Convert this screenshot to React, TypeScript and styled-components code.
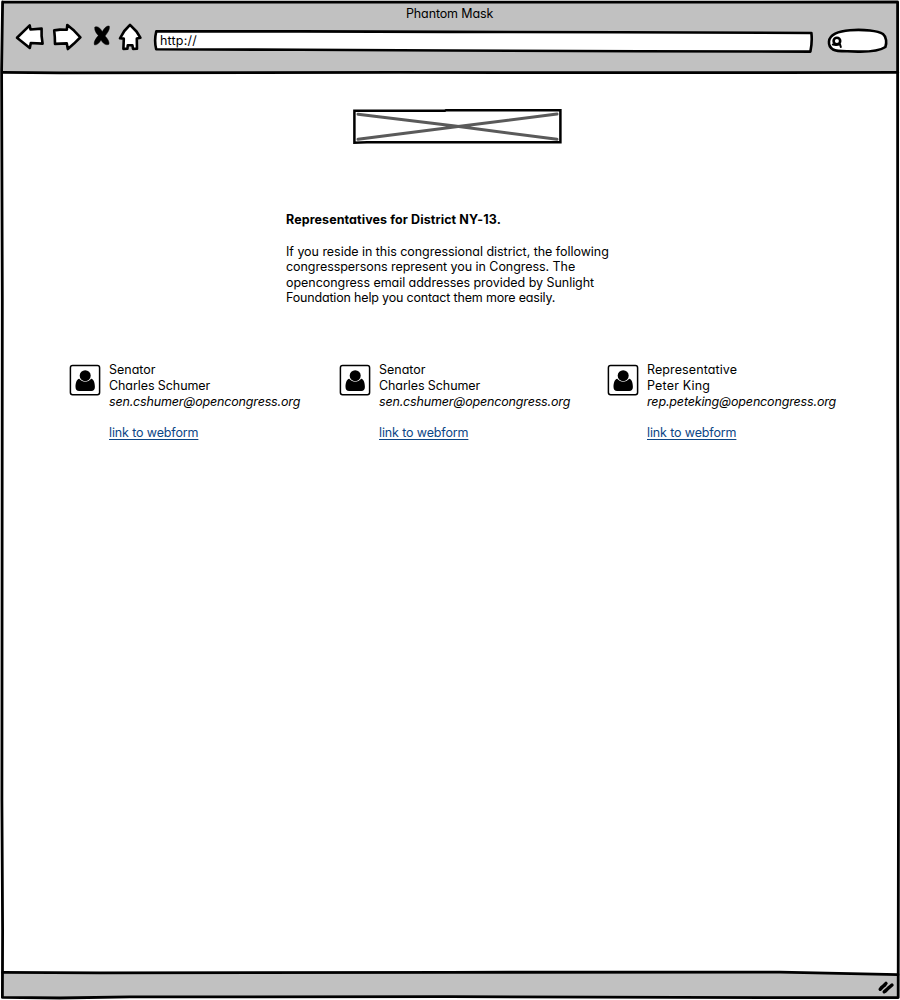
import React from "react";
import styled, { createGlobalStyle } from "styled-components";

const GlobalStyle = createGlobalStyle`
  *, *::before, *::after { box-sizing: border-box; }
  body { margin: 0; background: #fff; }
`;

const Window = styled.div`
  position: relative;
  display: flex;
  flex-direction: column;
  width: 900px;
  height: 1000px;
  overflow: hidden;
  background: #fff;
  color: #000;
  font-family: Inter, "Liberation Sans", sans-serif;
  font-feature-settings: "cv11" 1;
  font-size: 12.5px;
  line-height: 15.6px;
`;

const Sketch = styled.svg`
  display: block;
  flex: none;
  overflow: visible;
  fill: #fff;
  stroke: #000;
  stroke-width: 2.6;
  stroke-linejoin: round;
  stroke-linecap: round;
`;

const Backdrop = styled(Sketch)`
  position: absolute;
  inset: 0;
`;

const Header = styled.header`
  position: relative;
  display: flex;
  flex-direction: column;
  height: 73px;
  padding-top: 5.6px;
`;

const Title = styled.div`
  padding-left: 406px;
`;

const Toolbar = styled.div`
  display: flex;
  align-items: flex-start;
  padding: 1.8px 0 0 15px;
`;

const NavIcon = styled(Sketch)<{ $gap: number }>`
  margin-right: ${(p) => p.$gap}px;
`;

const AddressBar = styled.div`
  position: relative;
  width: 660px;
  height: 30px;
  margin-right: 13px;
  padding: 9.6px 0 0 7px;
`;

const Line = styled.span<{ $track?: number }>`
  position: relative;
  display: block;
  white-space: nowrap;
  letter-spacing: ${(p) => p.$track ?? 0}px;
`;

const Main = styled.main`
  position: relative;
  flex: 1;
  display: flex;
  flex-direction: column;
  padding-top: 36px;
`;

const LogoPlaceholder = styled(Sketch)`
  margin-left: 353px;
`;

const Intro = styled.section`
  margin: 67.6px 0 0 286px;
`;

const Heading = styled.h1`
  margin: 0 0 16.4px;
  font-size: inherit;
  font-weight: 650;
`;

const Copy = styled.p`
  margin: 0;
`;

const People = styled.section`
  display: grid;
  grid-template-columns: 270px 268px 250px;
  margin: 56.4px 0 0 69px;
`;

const Card = styled.article`
  display: flex;
  align-items: flex-start;
  gap: 8px;
`;

const Avatar = styled(Sketch)`
  margin-top: 2.5px;
`;

const Email = styled(Line)`
  font-style: italic;
`;

const WebformLink = styled.a`
  display: inline-block;
  margin-top: 15.6px;
  color: #0d4686;
  letter-spacing: -0.13px;
  text-decoration: underline;
  text-decoration-thickness: 1px;
  text-underline-offset: 2px;
  text-decoration-skip-ink: none;
`;

const Footer = styled.footer`
  position: relative;
  display: flex;
  justify-content: flex-end;
  height: 28px;
  padding: 8px 6px 0 0;
`;

const people = [
  { role: "Senator", roleTrack: 0, name: "Charles Schumer", nameTrack: -0.08, email: "sen.cshumer@opencongress.org", emailTrack: -0.167 },
  { role: "Senator", roleTrack: 0, name: "Charles Schumer", nameTrack: -0.08, email: "sen.cshumer@opencongress.org", emailTrack: -0.167 },
  { role: "Representative", roleTrack: 0.1, name: "Peter King", nameTrack: 0.18, email: "rep.peteking@opencongress.org", emailTrack: -0.155 },
];

function WindowFrame() {
  return (
    <Backdrop width="900" height="1000" viewBox="0 0 900 1000">
      <path d="M2.5 2 H897.8 V72.3 L600 72.4 L200 72.2 L2.5 72.5Z" fill="#c1c1c1" stroke="none" />
      <path d="M2.5 972.4 L780 972 L898 974.7 V997.6 L130 996.9 L2.5 997.6Z" fill="#c1c1c1" stroke="none" />
      <g fill="none" strokeWidth="2.8">
        <path d="M2.6 2 L450 2.1 L897.6 2 L897.7 400 L898.5 760 L898.2 997.6 L780 997.7 L450 996.6 L130 996.9 L60 998 L2.4 997.4 L2.6 930 L1.9 800 L2.3 300 L1.6 70 L2.6 2" />
        <path d="M2.5 72.4 L60 72.9 L400 72.4 L500 72.7 L780 72.7 L897.8 72.3" />
        <path d="M2.5 972.4 L100 972.8 L450 972.3 L780 972.1 L898 974.7" />
      </g>
    </Backdrop>
  );
}

function PersonIcon() {
  return (
    <Avatar width="32" height="31" viewBox="0 0 32 31">
      <rect x="1.4" y="0.6" width="29.2" height="29.2" rx="2.2" strokeWidth="1.5" />
      <path
        d="M10.2 13.8 C7.6 14.4 6.6 17.8 6.5 21.9 C6.5 24.4 7.9 26 10.1 26 H22.3 C24.5 26 25.9 24.4 25.9 21.9 C25.8 17.8 24.9 14.4 22.2 13.8 C20.4 15.6 18.4 16.7 16.2 16.7 C14 16.7 12 15.6 10.2 13.8Z"
        fill="#000"
        stroke="none"
      />
      <circle cx="16.2" cy="10.7" r="5.5" fill="#000" stroke="none" />
    </Avatar>
  );
}

export default function App() {
  return (
    <>
      <GlobalStyle />
      <Window>
        <WindowFrame />
        <Header>
          <Title>
            <Line $track={-0.13}>Phantom Mask</Line>
          </Title>
          <Toolbar>
            <NavIcon $gap={7} width="30" height="28" viewBox="15 23 30 28">
              <path d="M17 37.8 L29.7 25.4 L30.5 29.5 L41.6 28.6 L41.6 36 L42.6 43.6 L30.8 43 L29.8 48 L22 41.8Z" />
            </NavIcon>
            <NavIcon $gap={11} width="30" height="28" viewBox="52 23 30 28">
              <path d="M54.2 30.4 L60 29.6 L66.8 29.8 L67.3 25 L74 30.6 L80.4 37.3 L74 43.6 L67.8 49 L66.8 43.4 L55 43.9 L54.8 37Z" />
            </NavIcon>
            <NavIcon $gap={6} width="19" height="28" viewBox="93 23 19 28">
              <path
                d="M95 27.2 C97.5 25.6 100.3 28 102.3 31.8 C104.2 28.4 106 25.8 109.2 26 C110.2 29 107.5 33 105 36 C107.5 38.6 109.4 41.4 109 44.2 C105.8 45.8 102.8 43.2 101 40 C99.3 42.8 97.4 45 94.6 45 C93.2 42.4 95.8 38.6 98.3 35.6 C96 32.8 94 29.8 95 27.2Z"
                fill="#000"
                strokeWidth="0.5"
              />
            </NavIcon>
            <NavIcon $gap={10} width="25" height="28" viewBox="118 23 25 28">
              <path d="M130 24.9 L124.3 31 L120 38.3 L123.8 38.6 L123.4 48.9 L127.4 48.8 L127.8 45.2 L132.4 45.2 L133 48.9 L137 48.7 L136.8 38.6 L140.4 37.8 L136.5 31.5Z" />
            </NavIcon>
            <AddressBar>
              <Backdrop width="660" height="30" viewBox="153 23 660 30">
                <path d="M156.3 31.3 L300 31.4 L450 31.9 L620 32.2 L811.4 33 Q812.4 42 810.4 51.6 L640 51.2 L450 50.5 L300 49.8 L156.2 49.3 Q154 40.5 156.3 31.3Z" />
              </Backdrop>
              <Line $track={0.2}>http://</Line>
            </AddressBar>
            <Sketch width="62" height="28" viewBox="826 23 62 28">
              <path d="M829 41.5 C829.5 35 838 31 850 30.2 C864 29.2 878 30.8 883 34 C886.6 37 886.8 43 885.4 47 C880 50.6 870 51.8 858 51.6 C848 50.6 838 52.3 833 49.5 C830 47.5 828.7 45 829 41.5Z" />
              <circle cx="836.9" cy="41" r="3.3" />
              <path d="M832.8 44.4 L836 45 L840 44.2 L840.8 47" fill="none" strokeWidth="2" />
            </Sketch>
          </Toolbar>
        </Header>
        <Main>
          <LogoPlaceholder width="209" height="35" viewBox="353 109 209 35">
            <path d="M354.4 110.8 L445 110.7 L446 110.2 L560.4 110.2 V142.3 L367 142.3 L354.4 142.8Z" strokeWidth="2.5" strokeLinejoin="miter" />
            <path d="M358 114.2 L455 126 L557 139.3 M557 114 L458 126.4 L358 139.3" fill="none" stroke="#5a5a5a" strokeWidth="3" />
          </LogoPlaceholder>
          <Intro>
            <Heading>
              <Line $track={0.09}>Representatives for District NY-13.</Line>
            </Heading>
            <Copy>
              <Line $track={-0.04}>If you reside in this congressional district, the following</Line>
              <Line $track={-0.055}>congresspersons represent you in Congress. The</Line>
              <Line $track={-0.045}>opencongress email addresses provided by Sunlight</Line>
              <Line $track={-0.175}>Foundation help you contact them more easily.</Line>
            </Copy>
          </Intro>
          <People>
            {people.map((p, i) => (
              <Card key={i}>
                <PersonIcon />
                <div>
                  <Line $track={p.roleTrack}>{p.role}</Line>
                  <Line $track={p.nameTrack}>{p.name}</Line>
                  <Email $track={p.emailTrack}>{p.email}</Email>
                  <WebformLink>link to webform</WebformLink>
                </div>
              </Card>
            ))}
          </People>
        </Main>
        <Footer>
          <Sketch width="16" height="16" viewBox="878 980 16 16">
            <path d="M880.2 989.2 L886 983.4 M884.2 991.8 L892 985 M881.4 987.6 L885 984.8 M885.4 991.2 L889 987.4" fill="none" strokeWidth="3.4" />
          </Sketch>
        </Footer>
      </Window>
    </>
  );
}
